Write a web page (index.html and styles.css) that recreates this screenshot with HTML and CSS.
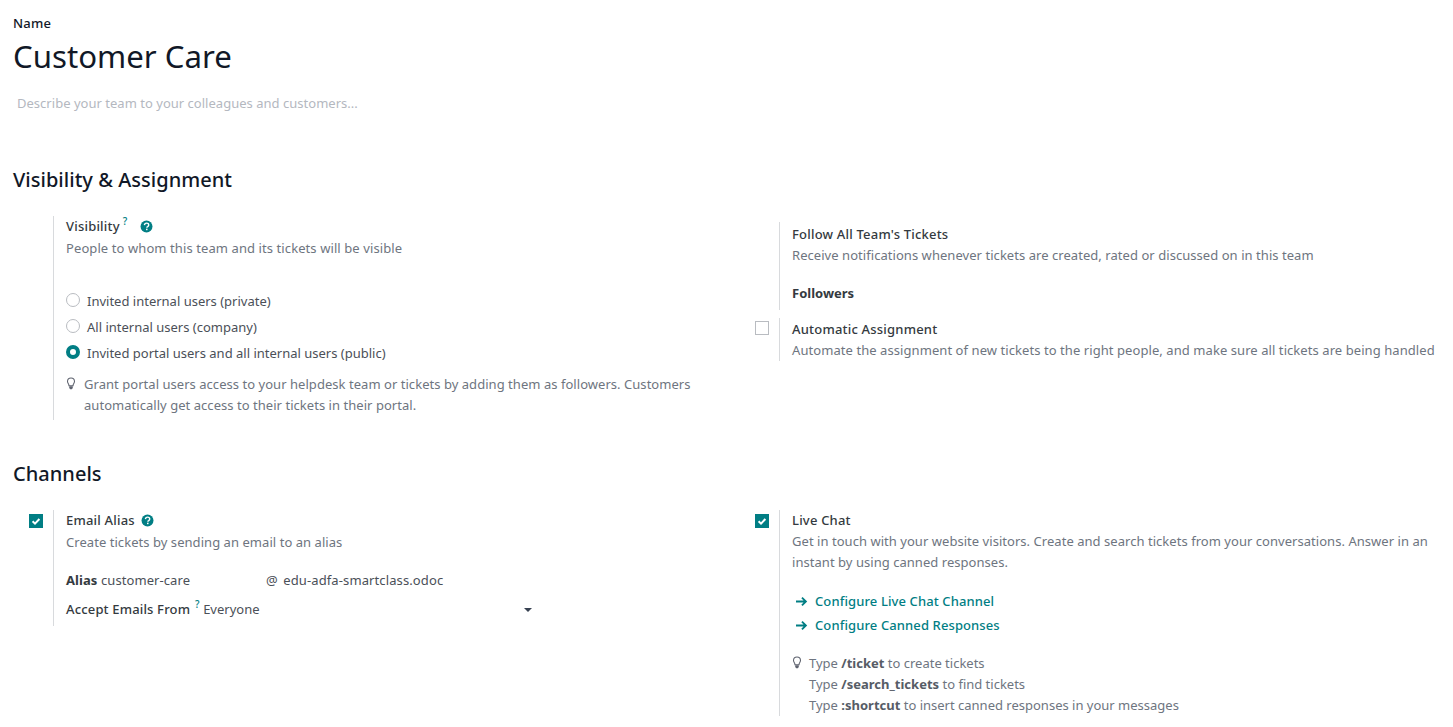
FILE: index.html
```html
<!DOCTYPE html>
<html lang="en">
<head>
<meta charset="utf-8">
<title>Customer Care</title>
<link rel="stylesheet" href="styles.css">
</head>
<body>
<main class="sheet">
  <div class="name-label">Name</div>
  <h1 class="title">Customer Care</h1>
  <div class="description">Describe your team to your colleagues and customers...</div>

  <h2 class="section-title first">Visibility &amp; Assignment</h2>
  <div class="settings-grid">
    <div class="setting vis-setting">
      <div class="box-col"></div>
      <div class="body">
        <div class="label">Visibility<sup class="q">?</sup>
          <svg class="help help-wide" viewBox="0 0 24 24"><circle cx="12" cy="12" r="11" fill="#017e84"/><path d="M8.2 9.4c.2-2.3 1.8-3.6 4-3.6 2.300 0 3.900 1.400 3.900 3.300 0 1.500-.8 2.300-2 3.100-1 .6-1.400 1.100-1.400 2" fill="none" stroke="#fff" stroke-width="2.600"/><rect x="11.100" y="16" width="2.800" height="2.800" fill="#fff"/></svg>
        </div>
        <div class="muted vis-desc">People to whom this team and its tickets will be visible</div>
        <div class="radios">
          <div class="radio-row"><span class="radio"></span><span>Invited internal users (private)</span></div>
          <div class="radio-row"><span class="radio"></span><span>All internal users (company)</span></div>
          <div class="radio-row"><span class="radio on"></span><span>Invited portal users and all internal users (public)</span></div>
        </div>
        <div class="tip muted tip-vis">
          <svg class="bulb" viewBox="0 0 12 16"><path d="M6 1.200a4.300 4.300 0 0 0-4.300 4.300c0 2.200 1.800 3 1.800 5.300h5c0-2.300 1.800-3.100 1.800-5.300A4.300 4.300 0 0 0 6 1.200z" fill="none" stroke="#5f636f" stroke-width="1.300"/><path d="M3.800 11.500h4.400v2l-1.200 1.500H5l-1.200-1.500z" fill="#5f636f"/></svg>
          <div>Grant portal users access to your helpdesk team or tickets by adding them as followers. Customers automatically get access to their tickets in their portal.</div>
        </div>
      </div>
    </div>
    <div class="right-stack">
      <div class="setting follow-setting">
        <div class="box-col"></div>
        <div class="body">
          <div class="label">Follow All Team's Tickets</div>
          <div class="muted">Receive notifications whenever tickets are created, rated or discussed on in this team</div>
          <div class="label strong followers">Followers</div>
        </div>
      </div>
      <div class="setting auto-setting">
        <div class="box-col"><span class="check"></span></div>
        <div class="body">
          <div class="label">Automatic Assignment</div>
          <div class="muted nowrap">Automate the assignment of new tickets to the right people, and make sure all tickets are being handled</div>
        </div>
      </div>
    </div>
  </div>

  <h2 class="section-title">Channels</h2>
  <div class="settings-grid">
    <div class="setting email-setting">
      <div class="box-col"><span class="check on"><svg viewBox="0 0 14 14"><path d="M3.600 7.200l2.400 2.400 4.400-4.600" fill="none" stroke="#fff" stroke-width="2"/></svg></span></div>
      <div class="body">
        <div class="label">Email Alias
          <svg class="help" viewBox="0 0 24 24"><circle cx="12" cy="12" r="11" fill="#017e84"/><path d="M8.2 9.4c.2-2.3 1.800-3.600 4-3.600 2.300 0 3.900 1.400 3.900 3.300 0 1.500-.8 2.300-2 3.100-1 .6-1.400 1.100-1.400 2" fill="none" stroke="#fff" stroke-width="2.600"/><rect x="11.100" y="16" width="2.800" height="2.800" fill="#fff"/></svg>
        </div>
        <div class="muted email-desc">Create tickets by sending an email to an alias</div>
        <div class="alias-row">
          <span class="alias-left"><b class="strong">Alias</b> customer-care</span>
          <span class="alias-domain">@ edu-adfa-smartclass.odoc</span>
        </div>
        <div class="accept-row">
          <span class="accept-left"><span class="label-inline">Accept Emails From<sup class="q">?</sup></span> Everyone</span>
          <span class="caret"></span>
        </div>
      </div>
    </div>
    <div class="setting chat-setting">
      <div class="box-col"><span class="check on"><svg viewBox="0 0 14 14"><path d="M3.600 7.200l2.400 2.400 4.400-4.600" fill="none" stroke="#fff" stroke-width="2"/></svg></span></div>
      <div class="body">
        <div class="label">Live Chat</div>
        <div class="muted chat-desc">Get in touch with your website visitors. Create and search tickets from your conversations. Answer in an instant by using canned responses.</div>
        <div class="links">
          <a class="link"><svg class="arrow" viewBox="0 0 14 12"><path d="M1 6h10.500M7.500 1.800L11.800 6l-4.300 4.200" fill="none" stroke="#017e84" stroke-width="2"/></svg>Configure Live Chat Channel</a>
          <a class="link"><svg class="arrow" viewBox="0 0 14 12"><path d="M1 6h10.500M7.500 1.800L11.800 6l-4.300 4.200" fill="none" stroke="#017e84" stroke-width="2"/></svg>Configure Canned Responses</a>
        </div>
        <div class="tip muted tip-chat">
          <svg class="bulb" viewBox="0 0 12 16"><path d="M6 1.200a4.300 4.300 0 0 0-4.300 4.300c0 2.200 1.800 3 1.800 5.300h5c0-2.300 1.800-3.100 1.800-5.300A4.300 4.300 0 0 0 6 1.200z" fill="none" stroke="#5f636f" stroke-width="1.300"/><path d="M3.800 11.500h4.400v2l-1.200 1.500H5l-1.200-1.500z" fill="#5f636f"/></svg>
          <div>Type <b>/ticket</b> to create tickets<br>Type <b>/search_tickets</b> to find tickets<br>Type <b>:shortcut</b> to insert canned responses in your messages</div>
        </div>
      </div>
    </div>
  </div>
</main>
</body>
</html>
```
FILE: styles.css
```css
* { box-sizing: border-box; }
html, body { margin: 0; padding: 0; background: #fff; height: 100%; overflow: hidden; }
body { font-family: "Noto Sans", "Open Sans", sans-serif; font-size: 13px; line-height: 21px; color: #4b5058; }
.sheet { padding: 13px 0 0 13px; }
.name-label { font-size: 13px; font-weight: 500; color: #111827; line-height: 21px; letter-spacing: 0.2px; }
.title { margin: 0; font-size: 31.2px; font-weight: 400; line-height: 44px; color: #111827; }
.description { margin: 15px 0 0 4px; color: #b4b8bf; line-height: 21px; letter-spacing: 0.02px; }
.section-title { margin: 39px 0 0; font-size: 20px; font-weight: 500; line-height: 30px; color: #111827; letter-spacing: 0.03px; }
.section-title.first { margin-top: 51px; }
.settings-grid { display: grid; grid-template-columns: 726px 700px; }
.section-title + .settings-grid { margin-top: 21px; }
.section-title.first + .settings-grid { margin-top: 21px; }
.setting { display: flex; align-items: stretch; }
.box-col { flex: 0 0 40px; display: flex; justify-content: flex-end; padding: 4px 10px 0 0; }
.body { border-left: 1px solid #d8dadd; padding-left: 12px; flex: 1; min-width: 0; }
.label { font-weight: 500; color: #343a40; letter-spacing: 0.2px; }
.strong { font-weight: 700; color: #343a40; }
.muted { color: #6e7580; letter-spacing: 0.05px; }
.nowrap { white-space: nowrap; letter-spacing: 0.07px; }
.chat-desc { letter-spacing: 0.04px; }
.q { font-size: 10px; color: #017e84; line-height: 0; margin-left: 3px; font-weight: 500; position: relative; top: -1px; vertical-align: super; }
.help { width: 13px; height: 13px; vertical-align: -2px; margin-left: 3px; }
.help-wide { margin-left: 9px; }
.vis-desc { margin-top: 1px; letter-spacing: 0.09px; }
.email-desc { margin-top: 1px; }
.vis-setting .body { padding-bottom: 4px; }
.radios { margin-top: 32px; display: flex; flex-direction: column; gap: 5px; }
.radio-row { display: flex; align-items: center; gap: 7px; }
.radio { width: 14px; height: 14px; border: 1px solid #b9bcc1; border-radius: 50%; flex: none; position: relative; top: -2px; }
.radio.on { border: 4px solid #017e84; }
.tip { display: flex; align-items: flex-start; gap: 8px; }
.tip-vis { margin-top: 10px; width: 640px; letter-spacing: 0.04px; }
.tip-chat { margin-top: 17px; gap: 7px; letter-spacing: 0; }
.bulb { width: 10px; height: 13px; flex: none; margin-top: 3px; }
.tip b { color: #565c66; font-weight: 700; }
.right-stack { display: flex; flex-direction: column; padding-top: 6px; gap: 8px; }
.follow-setting .body { padding-top: 2px; padding-bottom: 6px; }
.followers { margin-top: 17px; font-weight: 700; letter-spacing: 0; }
.auto-setting .body { padding: 1px 0 0 12px; }
.auto-setting .box-col { padding-top: 3px; }
.check { width: 14px; height: 14px; border: 1px solid #b9bcc1; display: block; flex: none; }
.check.on { background: #017e84; border: 0; }
.check svg { display: block; width: 14px; height: 14px; }
.alias-row { margin-top: 17px; display: flex; line-height: 21px; }
.alias-left { width: 200px; letter-spacing: 0.08px; }
.alias-domain { letter-spacing: 0.11px; word-spacing: 2px; }
.accept-row { margin-top: 8px; width: 466px; display: flex; justify-content: space-between; align-items: center; padding-bottom: 6px; }
.label-inline { font-weight: 500; color: #343a40; letter-spacing: 0.16px; }
.accept-left .q { margin-left: 5px; }
.caret { width: 0; height: 0; border-left: 4px solid transparent; border-right: 4px solid transparent; border-top: 4px solid #374151; }
.links { margin-top: 18px; display: flex; flex-direction: column; gap: 3px; }
.link { display: flex; align-items: center; color: #017e84; font-weight: 500; padding-left: 3px; gap: 7px; letter-spacing: 0.11px; }
.arrow { width: 13px; height: 11px; flex: none; }
.email-setting { align-self: start; }
```
